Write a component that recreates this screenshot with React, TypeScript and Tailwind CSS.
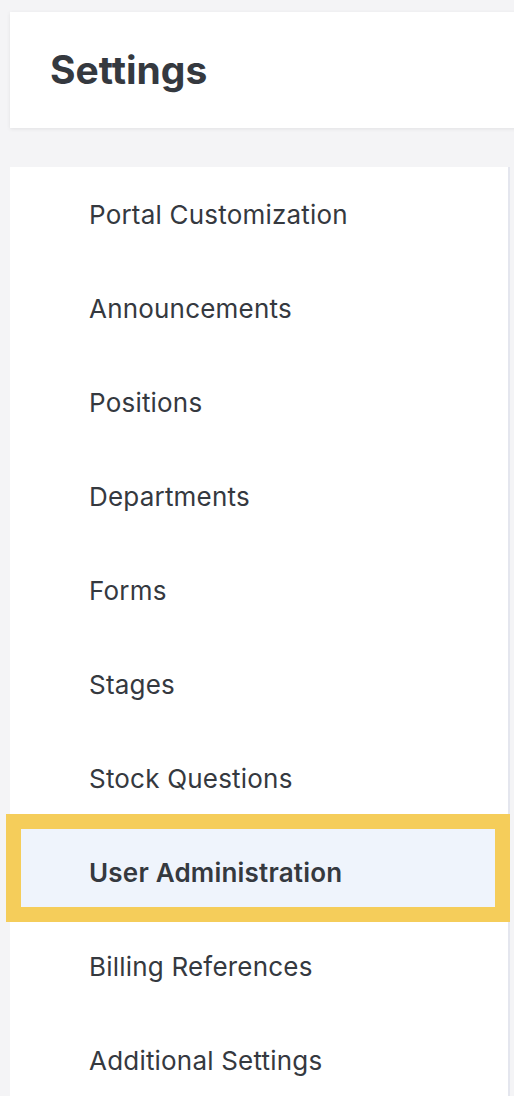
const items = [
  "Portal Customization",
  "Announcements",
  "Positions",
  "Departments",
  "Forms",
  "Stages",
  "Stock Questions",
  "User Administration",
  "Billing References",
  "Additional Settings",
];

const ACTIVE = "User Administration";

export default function App() {
  return (
    <div
      className="min-h-[1096px] w-[514px] overflow-hidden bg-[#f4f4f6] text-[#35393f]"
      style={{ fontFamily: "Inter, Lato, sans-serif" }}
    >
      <div className="pt-3">
        <header className="ml-[10px] -mr-10 flex h-[116px] items-center bg-white pl-10 shadow-[0_1px_4px_rgba(0,0,0,0.08)]">
          <h1 className="text-[39px] font-bold">Settings</h1>
        </header>
      </div>

      <nav className="mt-[39px] ml-[10px] w-[500px] border-r-2 border-[#e4e6ee] bg-white">
        {items.map((label) => {
          const active = label === ACTIVE;
          return (
            <div key={label} className="relative flex h-[94px] items-center pl-[79px]">
              {active && (
                <div className="absolute -top-[11px] -left-1 h-[108px] w-[504px] border-[15px] border-[#f5cd5a] bg-[#eff4fc]" />
              )}
              <span className={`relative text-[26px] tracking-[0.2px] ${active ? "font-semibold" : ""}`}>
                {label}
              </span>
            </div>
          );
        })}
      </nav>
    </div>
  );
}
